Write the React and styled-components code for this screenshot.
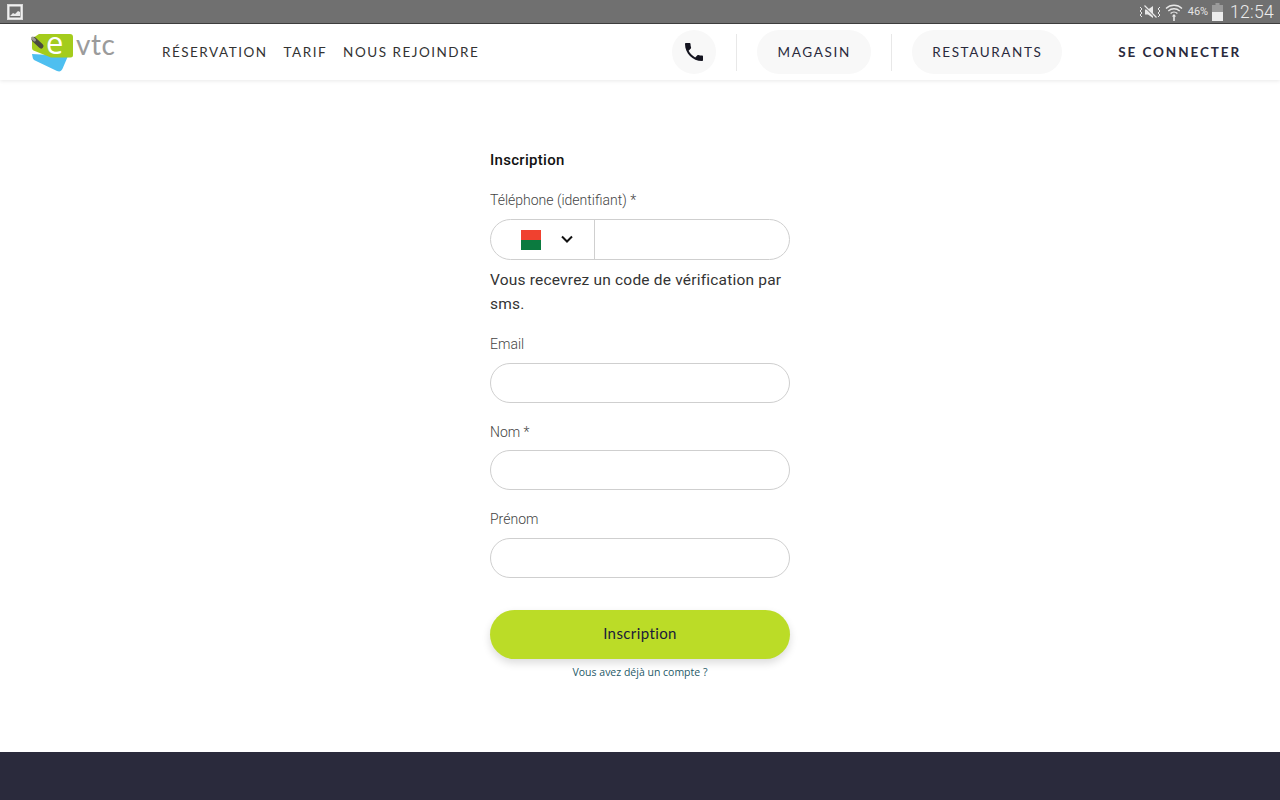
import React from 'react';
import styled, { createGlobalStyle } from 'styled-components';

const Global = createGlobalStyle`
  html, body { margin: 0; padding: 0; background: #fff; }
  * { box-sizing: border-box; }
  body { font-family: "Inter", "Liberation Sans", sans-serif; }
`;
const Page = styled.div`
  width: 1280px; height: 800px; display: flex; flex-direction: column; overflow: hidden;
`;
const StatusBar = styled.div`
  height: 24px; flex: none; background: #707070; border-bottom: 1px solid #3f3f3f;
  display: flex; align-items: center; justify-content: space-between; padding: 0 6px 0 7px; color: #e8e8e8;
`;
const StatusRight = styled.div`
  display: flex; align-items: center;
  > svg:first-child { margin-right: 3px; }
`;
const Percent = styled.span`
  font-family: "Roboto", sans-serif; font-size: 11px; color: #e4e4e4; margin: 0 4px 0 5px; letter-spacing: -0.1px;
`;
const Clock = styled.span`
  font-family: "Roboto", sans-serif; font-size: 17.5px; font-weight: 300; color: #ececec; margin-left: 7px; letter-spacing: 0.3px;
`;
const Header = styled.header`
  height: 56px; flex: none; background: #fff; box-shadow: 0 1px 4px rgba(0,0,0,.09);
  display: flex; align-items: center; padding: 0 39px 0 30px; position: relative; z-index: 1;
`;
const Logo = styled.div`
  width: 88px; height: 50px; flex: none; margin-right: 44px; align-self: flex-start; position: relative;
`;
const LogoE = styled.span`
  position: absolute; left: 16px; top: 4px; font-family: "Open Sans", sans-serif; font-size: 31px; line-height: 28px; color: #fff;
`;
const LogoVtc = styled.span`
  position: absolute; left: 46px; top: 6px; font-family: "Lato", sans-serif; font-size: 28px; line-height: 28px; letter-spacing: .5px; color: #9b9b9b;
`;
const Nav = styled.nav`
  display: flex; gap: 16px; flex: 1;
`;
const NavLink = styled.a`
  font-family: "Lato", sans-serif; font-size: 13.5px; font-weight: 400; letter-spacing: 1.5px; color: #333; margin-top: -1px;
`;
const Pill = styled.div`
  height: 44px; border-radius: 22px; background: #f8f8f8; display: flex; align-items: center; justify-content: center;
  font-family: "Lato", sans-serif; font-size: 13.5px; letter-spacing: ${p => p.$ls || 1.7}px; color: #2a2a3c; width: ${p => p.$w}px; flex: none;
`;
const Divider = styled.div`
  width: 1px; height: 37px; background: #e8e8e8; flex: none; margin: 0 20px;
`;
const Login = styled.a`
  font-family: "Lato", sans-serif; font-weight: 700; font-size: 13.5px; letter-spacing: 1.9px; color: #2a2a3c; margin-left: 56px; margin-top: -1px;
`;
const Main = styled.main`
  flex: 1; display: flex; flex-direction: column; align-items: center; padding-top: 71px; background: #fff;
`;
const Form = styled.form`
  width: 300px; display: flex; flex-direction: column;
`;
const Title = styled.h1`
  margin: 0; font-size: 15px; font-weight: 500; line-height: 18px; color: #111; font-family: "Roboto", sans-serif; letter-spacing: .3px;
`;
const Label = styled.label`
  display: block; font-family: "Roboto", sans-serif; font-weight: 300; font-size: 14px; line-height: 18px; color: #444;
  margin-top: ${p => p.$mt}px; margin-bottom: ${p => p.$mb}px;
`;
const Field = styled.div`
  height: ${p => p.$h || 40}px; border: 1px solid #cfcfcf; border-radius: 21px; background: #fff; display: flex; align-items: stretch;
`;
const Country = styled.div`
  width: 104px; border-right: 1px solid #cfcfcf; display: flex; align-items: center; padding-left: 30px; gap: 19px;
`;
const Flag = styled.div`
  width: 20px; height: 20px; display: flex; flex-direction: column;
`;
const FlagPart = styled.div`
  flex: 1; background: ${p => p.$c};
`;
const Help = styled.p`
  margin: 8px 0 0; font-family: "Roboto", sans-serif; font-size: 15.5px; line-height: 24px; color: #333; letter-spacing: 0.2px;
`;
const Submit = styled.button`
  margin-top: 32px; height: 49px; border: 0; border-radius: 25px; background: #bbdc27; box-shadow: 0 4px 8px rgba(0,0,0,.14); padding: 0 0 3px;
  font-family: "Lato", sans-serif; font-size: 15px; letter-spacing: .4px; color: #1a1a3a;
`;
const Already = styled.a`
  margin-top: 6px; text-align: center; font-family: "Open Sans", sans-serif; font-size: 10.5px; line-height: 15px; color: #1f5a68;
`;
const Footer = styled.footer`
  height: 48px; flex: none; background: #2a2a3c;
`;

const PictureIcon = () => (
  <svg width="16" height="16" viewBox="0 0 16 16"><rect x=".5" y=".5" width="15" height="15" fill="#f0f0f0" stroke="#d8d8d8"/><rect x="2.5" y="2.5" width="11" height="11" fill="#6e6e6e"/><path d="M3 12l3-3 2 1 3-3 2 1v4z" fill="#e8e8e8"/></svg>
);
const MuteIcon = () => (
  <svg width="24" height="16" viewBox="0 0 24 16" fill="none" stroke="#e8e8e8"><path d="M2 3l2 2-2 2 2 2-2 2 2 2M22 3l-2 2 2 2-2 2 2 2-2 2" strokeWidth="1"/><path d="M7 5.500h3L15 2v12l-5-3.500H7z" fill="#e8e8e8" stroke="none"/><path d="M6 2l12 12" strokeWidth="1.6" stroke="#707070"/><path d="M6.500 1.500l12 12" strokeWidth="1.2"/></svg>
);
const WifiIcon = () => (
  <svg width="18" height="20" viewBox="0 0 18 20" fill="none" stroke="#e8e8e8" strokeWidth="1.3"><path d="M1 6.500a11.500 11.500 0 0 1 16 0M3.300 9a8.300 8.300 0 0 1 11.400 0M5.600 11.500a5 5 0 0 1 6.800 0"/><path d="M9 12l-2.200 2.600h1.400V19h1.600v-4.400h1.400z" fill="#e8e8e8" stroke="none"/></svg>
);
const BatteryIcon = () => (
  <svg width="11" height="18" viewBox="0 0 11 18"><rect x="3.500" y="0" width="4" height="2" fill="#9a9a9a"/><rect x="0" y="2" width="11" height="7" fill="#9a9a9a"/><rect x="0" y="9" width="11" height="9" fill="#ececec"/></svg>
);
const LogoMark = () => (
  <svg width="88" height="50" viewBox="0 0 88 50">
    <path d="M2 30l.8 4q.3 1.500 1.700 2.200L27 47q2.500 1 4-.2 1-.8 1.500-2L38 32z" fill="#4ebff0"/>
    <path d="M9 10h31q3 0 3 3v18q0 2.500-2.500 2.500H21L3.500 26.500Q2 25.800 2 24V16q0-1 1-2z" fill="#a4cc1c"/>
    <path d="M4 15.500l7 6.500" stroke="#4a4a40" strokeWidth="5" strokeLinecap="round"/>
    <path d="M2.500 14l2 2" stroke="#9a9a90" strokeWidth="3" strokeLinecap="round"/>
  </svg>
);
const PhoneIcon = () => (
  <svg width="24" height="24" viewBox="0 0 24 24" fill="#14141f"><path d="M6.620 10.790c1.440 2.830 3.760 5.140 6.590 6.590l2.200-2.200c.27-.27.67-.36 1.020-.24 1.120.37 2.330.57 3.570.57.550 0 1 .45 1 1V20c0 .55-.45 1-1 1-9.390 0-17-7.610-17-17 0-.55.45-1 1-1h3.500c.55 0 1 .45 1 1 0 1.250.2 2.450.57 3.570.11.350.03.740-.25 1.020z"/></svg>
);
const Chevron = () => (
  <svg width="14" height="9" viewBox="0 0 14 9" fill="none" stroke="#111" strokeWidth="2"><path d="M2 1.500l5 5 5-5"/></svg>
);

export default function App() {
  return (
    <Page>
      <Global />
      <StatusBar>
        <PictureIcon />
        <StatusRight>
          <MuteIcon />
          <WifiIcon />
          <Percent>46%</Percent>
          <BatteryIcon />
          <Clock>12:54</Clock>
        </StatusRight>
      </StatusBar>
      <Header>
        <Logo>
          <LogoMark />
          <LogoE>e</LogoE>
          <LogoVtc>vtc</LogoVtc>
        </Logo>
        <Nav>
          <NavLink>RÉSERVATION</NavLink>
          <NavLink>TARIF</NavLink>
          <NavLink>NOUS REJOINDRE</NavLink>
        </Nav>
        <Pill $w={44}><PhoneIcon /></Pill>
        <Divider />
        <Pill $w={114}>MAGASIN</Pill>
        <Divider />
        <Pill $w={150} $ls={1.6}>RESTAURANTS</Pill>
        <Login>SE CONNECTER</Login>
      </Header>
      <Main>
        <Form>
          <Title>Inscription</Title>
          <Label $mt={22} $mb={10}>Téléphone (identifiant) *</Label>
          <Field $h={41}>
            <Country>
              <Flag><FlagPart $c="#f0412f" /><FlagPart $c="#0b7a3f" /></Flag>
              <Chevron />
            </Country>
          </Field>
          <Help>Vous recevrez un code de vérification par sms.</Help>
          <Label $mt={19} $mb={10}>Email</Label>
          <Field />
          <Label $mt={20} $mb={9}>Nom *</Label>
          <Field />
          <Label $mt={20} $mb={10}>Prénom</Label>
          <Field />
          <Submit type="button">Inscription</Submit>
          <Already>Vous avez déjà un compte ?</Already>
        </Form>
      </Main>
      <Footer />
    </Page>
  );
}
